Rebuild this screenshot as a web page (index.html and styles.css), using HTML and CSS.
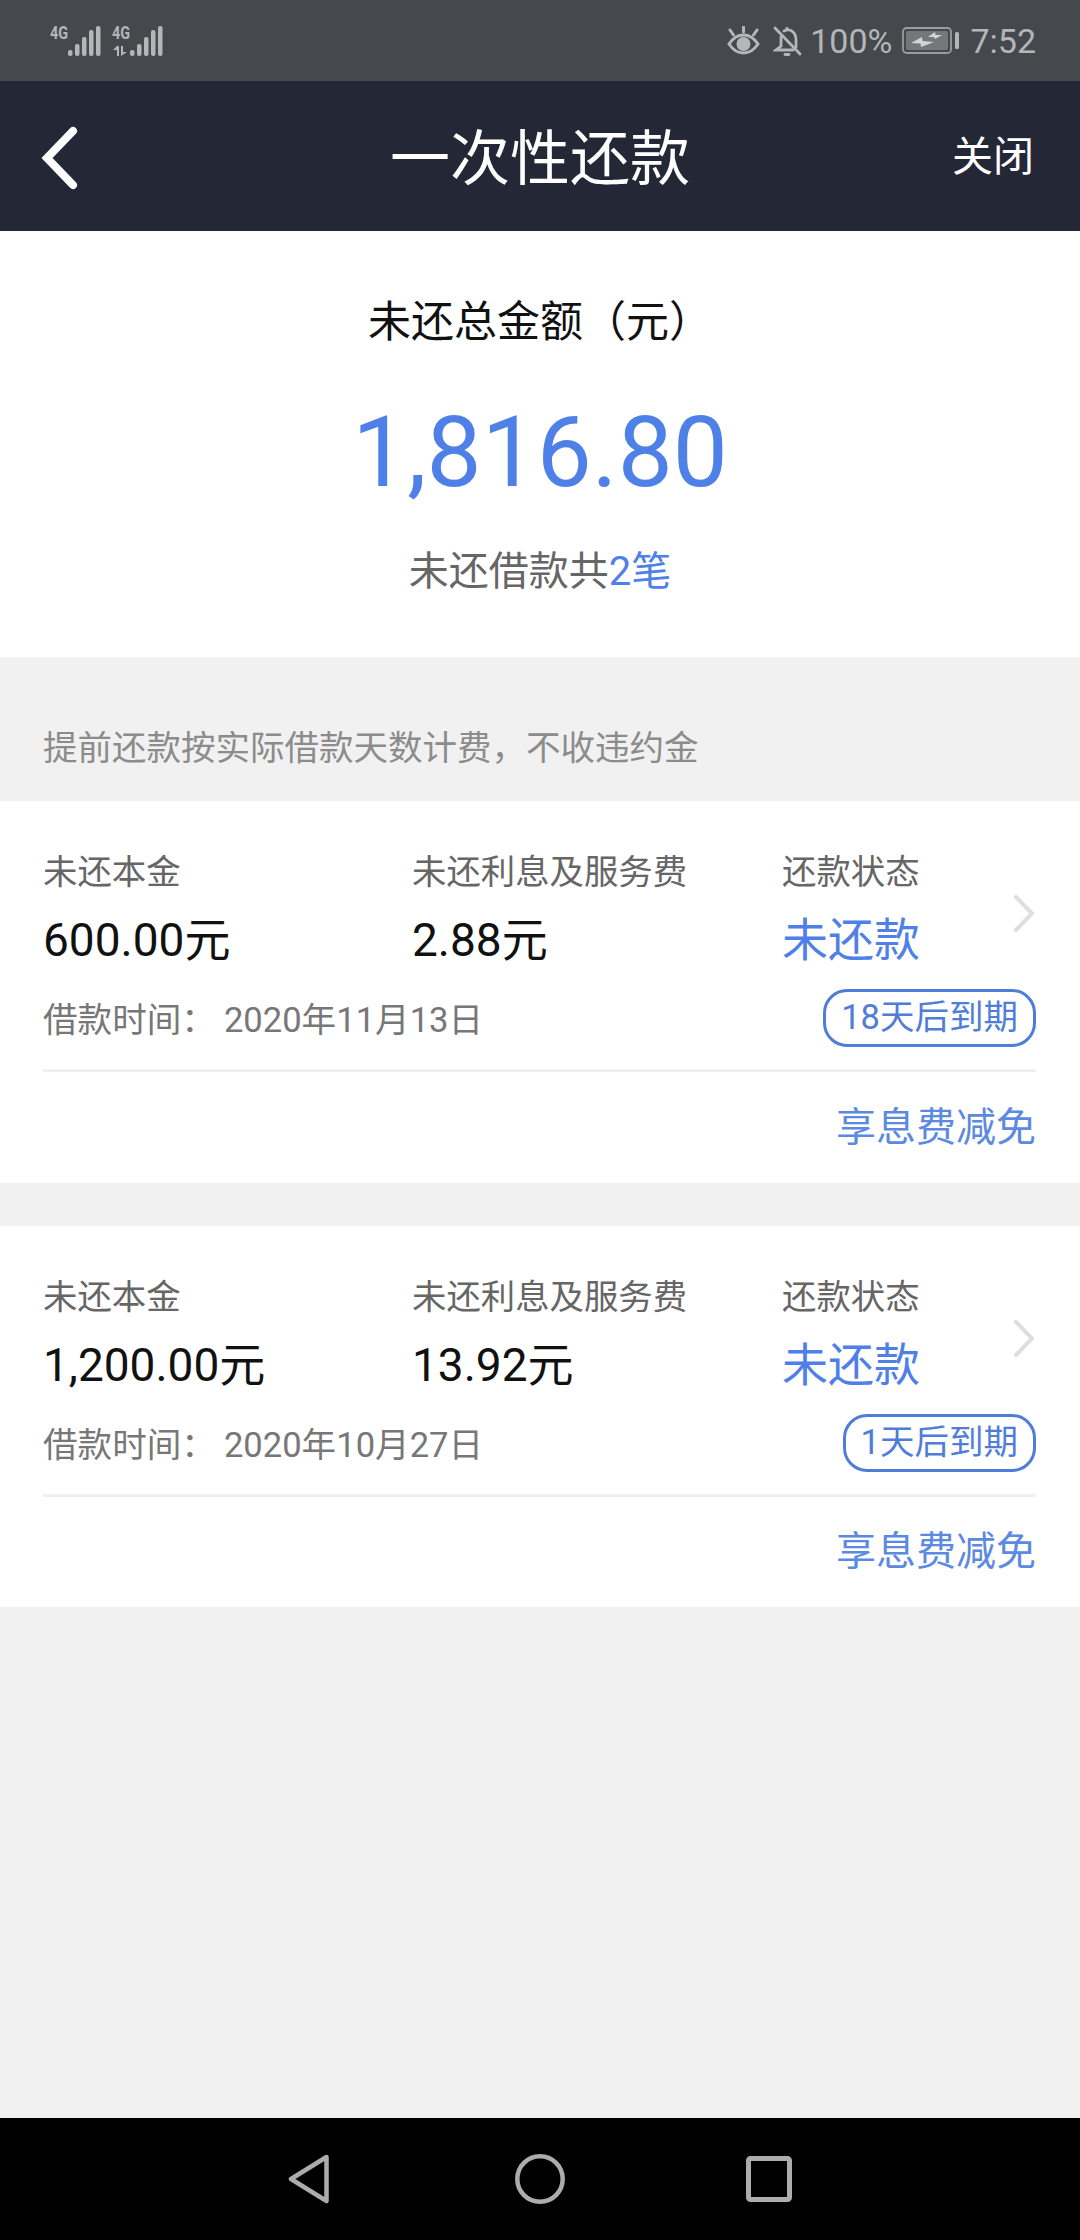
FILE: index.html
```html
<!DOCTYPE html>
<html>
<head>
    <title>一次性还款</title>
    <link rel="stylesheet" href="styles.css">
</head>
<body>
    <div class="page">
        <!-- 状态栏 -->
        <div class="status-bar">
            <div class="signals">
                <div class="sim">
                    <span class="net">4G</span>
                    <svg width="33" height="30" viewBox="0 0 33 30"><g fill="#b4b6b8"><rect x="0" y="24" width="4.5" height="6" rx="2"/><rect x="7" y="18" width="4.5" height="12" rx="2"/><rect x="14" y="11" width="4.5" height="19" rx="2"/><rect x="21" y="4" width="4.5" height="26" rx="2"/><rect x="28" y="0" width="4.5" height="30" rx="2"/></g></svg>
                </div>
                <div class="sim">
                    <span class="net">4G</span>
                    <svg class="arrows" width="16" height="10" viewBox="0 0 16 10"><g fill="#b4b6b8"><path d="M5 0h2v10H5V4H1z"/><path d="M9 0h2v6h4l-6 4z"/></g></svg>
                    <svg width="33" height="30" viewBox="0 0 33 30"><g fill="#b4b6b8"><rect x="0" y="24" width="4.5" height="6" rx="2"/><rect x="7" y="18" width="4.5" height="12" rx="2"/><rect x="14" y="11" width="4.5" height="19" rx="2"/><rect x="21" y="4" width="4.5" height="26" rx="2"/><rect x="28" y="0" width="4.5" height="30" rx="2"/></g></svg>
                </div>
            </div>
            <div class="status-right">
                <svg class="eye" width="33" height="29" viewBox="0 0 33 29"><g fill="none" stroke="#b4b6b8" stroke-width="3"><path d="M2 18c4-6 9-9 14.5-9s10.500 3 14.5 9c-4 6-9 9-14.500 9s-10.500-3-14.500-9z"/><path d="M16.500 1v5M3 4l3.500 5M30 4l-3.500 5" stroke-linecap="round"/></g><circle cx="16.5" cy="18" r="7" fill="#b4b6b8"/></svg>
                <svg width="29" height="30" viewBox="0 0 29 30"><g fill="none" stroke="#b4b6b8" stroke-width="2.8" stroke-linecap="round"><path d="M2 2l25 26"/><path d="M11 5c6-3 12 1 12 9v7"/><path d="M8 11v9l-5 4h17"/><path d="M14 2.500v1"/><path d="M12 28.500h4"/></g></svg>
                <span class="status-text">100%</span>
                <svg width="58" height="27" viewBox="0 0 58 27"><rect x="1" y="1" width="48" height="25" rx="3.5" fill="none" stroke="#9a9d9f" stroke-width="1.8"/><rect x="4" y="4" width="42" height="19" rx="2" fill="#75787b"/><rect x="53" y="5" width="4" height="17" rx="1.5" fill="#b4b6b8"/><path d="M9 16l11-6 .5 4L32 15l-13 5-.5-3.500zM26 10l7-5 .5 3H40l-7 4-1-2z" fill="#d4d5d6"/></svg>
                <span class="status-text time">7:52</span>
            </div>
        </div>

        <!-- 标题栏 -->
        <div class="nav-bar">
            <svg class="back" width="38" height="64" viewBox="0 0 38 64"><path d="M33 5L7 32l26 27" fill="none" stroke="#fff" stroke-width="8" stroke-linecap="round"/></svg>
            <div class="nav-title">一次性还款</div>
            <div class="nav-close">关闭</div>
        </div>

        <!-- 总金额 -->
        <div class="summary">
            <div class="summary-label">未还总金额（元）</div>
            <div class="summary-amount">1,816.80</div>
            <div class="summary-count">未还借款共<span class="blue">2笔</span></div>
        </div>

        <div class="notice">提前还款按实际借款天数计费，不收违约金</div>

        <!-- 借款列表 -->
        <div class="card">
            <div class="card-grid">
                <div class="label">未还本金</div>
                <div class="label">未还利息及服务费</div>
                <div class="label">还款状态</div>
                <svg class="chevron" width="20" height="37" viewBox="0 0 20 37"><path d="M2 2l16 16.500L2 35" fill="none" stroke="#dedede" stroke-width="4" stroke-linecap="round"/></svg>
                <div class="value">600.00元</div>
                <div class="value">2.88元</div>
                <div class="state">未还款</div>
                <div class="date"><span class="date-key">借款时间：</span>2020年11月13日</div>
                <div class="tag-wrap"><span class="tag">18天后到期</span></div>
            </div>
            <div class="card-action"><span class="action-link">享息费减免</span></div>
        </div>

        <div class="card">
            <div class="card-grid">
                <div class="label">未还本金</div>
                <div class="label">未还利息及服务费</div>
                <div class="label">还款状态</div>
                <svg class="chevron" width="20" height="37" viewBox="0 0 20 37"><path d="M2 2l16 16.500L2 35" fill="none" stroke="#dedede" stroke-width="4" stroke-linecap="round"/></svg>
                <div class="value">1,200.00元</div>
                <div class="value">13.92元</div>
                <div class="state">未还款</div>
                <div class="date"><span class="date-key">借款时间：</span>2020年10月27日</div>
                <div class="tag-wrap"><span class="tag">1天后到期</span></div>
            </div>
            <div class="card-action"><span class="action-link">享息费减免</span></div>
        </div>

        <div class="spacer"></div>

        <!-- 系统导航 -->
        <div class="system-nav">
            <svg class="nav-back" width="42" height="50" viewBox="0 0 42 50"><path d="M38.500 3L3 25l35.500 22z" fill="none" stroke="#acacac" stroke-width="4.5" stroke-linejoin="round"/></svg>
            <svg width="50" height="50" viewBox="0 0 50 50"><circle cx="25" cy="25" r="22.7" fill="none" stroke="#acacac" stroke-width="4.5"/></svg>
            <svg width="46" height="46" viewBox="0 0 46 46"><rect x="2.5" y="2.5" width="41" height="41" rx="2" fill="none" stroke="#acacac" stroke-width="5"/></svg>
        </div>
    </div>
</body>
</html>
```

FILE: styles.css
```css
* {
    box-sizing: border-box;
}

body {
    margin: 0;
    background: #f1f1f1;
    font-family: Roboto, "Noto Sans CJK SC", sans-serif;
}

.page {
    width: 1080px;
    height: 2240px;
    display: flex;
    flex-direction: column;
    overflow: hidden;
}

.status-bar {
    height: 81px;
    background: #45494d;
    display: flex;
    justify-content: space-between;
    align-items: center;
    padding: 0 44px 0 50px;
}

.signals {
    display: flex;
    gap: 11px;
}

.sim {
    position: relative;
    width: 51px;
    height: 30px;
    display: flex;
    justify-content: flex-end;
}

.net {
    position: absolute;
    left: 0;
    top: -3px;
    font-size: 18px;
    line-height: 20px;
    font-weight: 700;
    color: #b4b6b8;
    transform: scaleX(0.8);
    transform-origin: left;
}

.arrows {
    position: absolute;
    left: 0;
    top: 20px;
}

.status-right {
    display: flex;
    align-items: center;
    gap: 8px;
}

.eye {
    margin-right: 5px;
}

.status-text {
    font-size: 34px;
    color: #b4b6b8;
    margin-right: 2px;
}

.time {
    margin-left: 2px;
    margin-right: 0;
}

.nav-bar {
    height: 150px;
    background: #242836;
    display: grid;
    grid-template-columns: 1fr auto 1fr;
    align-items: center;
    padding: 0 46px 0 40px;
    color: #fff;
}

.nav-title {
    font-size: 60px;
    line-height: 150px;
    padding-top: 4px;
    margin-left: 6px;
}

.nav-close {
    font-size: 41px;
    justify-self: end;
    margin-bottom: 10px;
}

.summary {
    height: 426px;
    background: #fff;
    display: flex;
    flex-direction: column;
    align-items: center;
    padding-top: 60px;
}

.summary-label {
    font-size: 43px;
    line-height: 62px;
    color: #111;
}

.summary-amount {
    font-size: 98px;
    line-height: 120px;
    margin-top: 40px;
    color: #4f80e8;
}

.summary-count {
    font-size: 40px;
    line-height: 60px;
    margin-top: 29px;
    color: #666;
}

.blue {
    color: #4f80e8;
}

.notice {
    height: 144px;
    padding: 66px 43px 0;
    font-size: 34.5px;
    line-height: 50px;
    color: #8c8c8c;
}

.card {
    background: #fff;
    margin-bottom: 43px;
    padding: 45px 44px 0 43px;
}

.card-grid {
    display: grid;
    grid-template-columns: 369px 370px 1fr 22px;
    grid-template-rows: 50px 88px 66px;
    border-bottom: 3px solid #f0f0f0;
    height: 226px;
}

.label {
    font-size: 34.4px;
    line-height: 50px;
    padding-top: 1px;
    color: #666;
}

.chevron {
    grid-row: 1 / 3;
    grid-column: 4;
    align-self: center;
    margin-bottom: 3px;
}

.value {
    grid-row: 2;
    font-size: 46px;
    line-height: 88px;
    color: #111;
}

.state {
    grid-row: 2;
    grid-column: 3;
    font-size: 46px;
    line-height: 88px;
    color: #4f80e8;
}

.date {
    grid-row: 3;
    grid-column: 1 / 3;
    font-size: 34.6px;
    line-height: 72px;
    color: #777;
}

.date-key {
    margin-right: 8px;
}

.tag-wrap {
    grid-row: 3;
    grid-column: 3 / 5;
    display: flex;
    justify-content: flex-end;
    align-items: flex-start;
    padding-top: 5px;
}

.tag {
    height: 58px;
    padding: 0 15px;
    border: 3px solid #4f7dd8;
    border-radius: 24px;
    font-size: 34.5px;
    line-height: 50px;
    color: #4f7dd8;
}

.card-action {
    height: 111px;
    padding-bottom: 8px;
    display: flex;
    justify-content: flex-end;
    align-items: center;
}

.card + .card .card-action {
    height: 110px;
}

.action-link {
    font-size: 40px;
    color: #5b8ae0;
}

.spacer {
    flex: 1;
}

.system-nav {
    height: 122px;
    background: #000;
    display: flex;
    align-items: center;
    justify-content: center;
    gap: 181px;
}

.nav-back {
    margin-right: 4px;
}
```
